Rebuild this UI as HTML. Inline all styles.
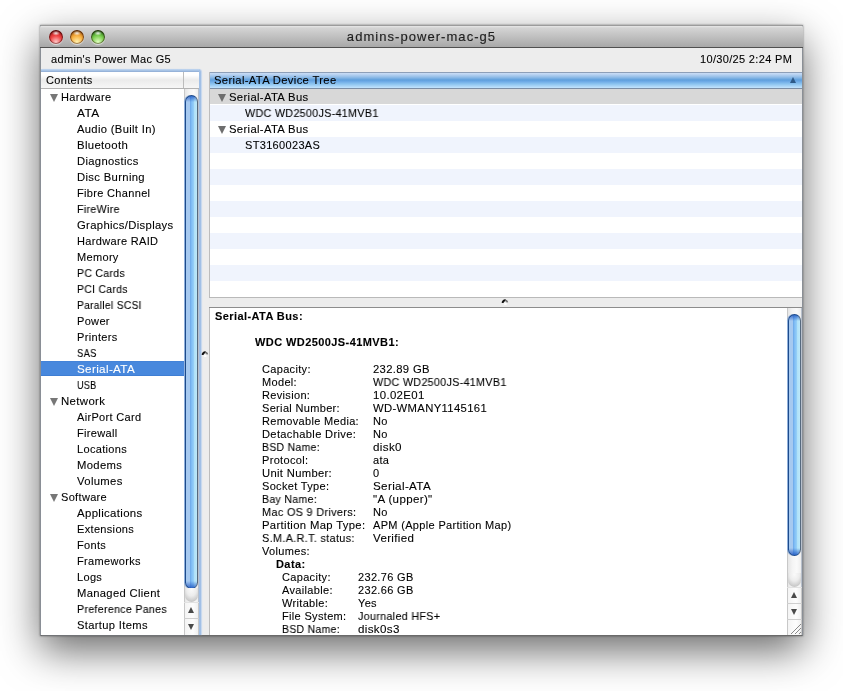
<!DOCTYPE html>
<html><head><meta charset="utf-8">
<style>
*{box-sizing:border-box;margin:0;padding:0}
html,body{width:843px;height:691px;overflow:hidden;background:#fff;font-family:"Liberation Sans",sans-serif;font-size:11px;color:#000}
div{position:absolute}
.t{white-space:pre;letter-spacing:0.33px;line-height:13px;will-change:transform;-webkit-text-stroke:0.1px currentColor}
.b{font-weight:bold;letter-spacing:0.42px}
#shadow{left:40px;top:25px;width:763px;height:611px;box-shadow:0 15px 38px rgba(0,0,0,0.58),0 0 2px rgba(0,0,0,0.45)}
#win{left:40px;top:25px;width:763px;height:611px;background:#ededed;border:1px solid #8a8f96;border-top-color:#9c9c9c;border-bottom-color:#6a6a6a}
#title{left:40px;top:25px;width:763px;height:23px;background:linear-gradient(#9c9c9c 0,#9c9c9c 1px,#e8e8e8 1px,#d4d4d4 3px,#a8a8a8 22px,#505050 22px);border-radius:3px 3px 0 0}
#title .tt{left:0;width:763px;top:4px;text-align:center;font-size:13px;letter-spacing:1.05px;color:#1e1e1e;white-space:pre;will-change:transform;-webkit-text-stroke:0.15px #1e1e1e}
.btn{top:5px;width:14px;height:14px;border-radius:50%;box-shadow:inset 0 0 0 1px rgba(40,0,0,0.45),inset 0 2px 2px rgba(0,0,0,0.35),0 1px 1px rgba(255,255,255,0.6)}
.ring{background:#93b6e2}
.hdr{background:linear-gradient(#ffffff 0,#ffffff 3px,#ebebeb 8px,#eeeeee 10px,#f6f6f6 16px,#b2b2b2 16px)}
.sel{background:linear-gradient(#3f7ed4,#4888dd 1px,#4888dd 14px,#3f7ed4 14px)}
.tri{width:0;height:0;border-left:4.5px solid transparent;border-right:4.5px solid transparent;border-top:8px solid #777}
.track{background:linear-gradient(90deg,#c8c8c8 0,#c8c8c8 1px,#e6e6e6 1px,#f4f4f4 35%,#fafafa 65%,#eeeeee 93%,#b8c0cc 93%)}
.thumb{border-radius:7px;border:1px solid #1d4a8a;border-right-color:#56697e;background:linear-gradient(rgba(25,80,190,0.75) 0,rgba(25,80,190,0) 6px,rgba(25,80,190,0) calc(100% - 7px),rgba(25,80,190,0.8) 100%),linear-gradient(90deg,#a6c9f0 0,#a6c9f0 4px,#6aa4e4 4px,#7ab8f4 5px,#98d2f8 8px,#aee0f8 8px,#bce8fa 11px,#8aa8c8 11px);box-shadow:-1px 0 0 #8fb0dc}
.tend{border-radius:0 0 7px 7px;background:radial-gradient(ellipse 9px 12px at 50% 10%,#fafafa 0,#ececec 55%,#c8c8c8 100%)}
.arrow{background:linear-gradient(90deg,#c8c8c8 0,#c8c8c8 1px,#f4f4f4 1px,#fdfdfd 60%,#f0f0f0 93%,#c8c8c8 93%);border-top:1px solid #cfcfcf}
.up{width:0;height:0;border-left:3.5px solid transparent;border-right:3.5px solid transparent;border-bottom:6px solid #4a4a4a}
.dn{width:0;height:0;border-left:3.5px solid transparent;border-right:3.5px solid transparent;border-top:6px solid #4a4a4a}
.bhdr{background:linear-gradient(#8d9fb8 0,#8d9fb8 1px,#c9dcf5 1px,#c0d7f3 2px,#94bee8 5px,#5e9fdc 8px,#6eaaE6 9.5px,#8cc4f0 12px,#b6dcfa 15px,#c4e4fd 16px,#7c8ea5 16px)}
</style></head><body>
<div id="shadow"></div>
<div id="win"></div>
<div id="title">
<div class="btn" style="left:9px;background:radial-gradient(ellipse 4px 2.6px at 50% 22%,rgba(255,255,255,0.95),rgba(255,255,255,0) 100%),radial-gradient(circle at 50% 85%,#ffc8c8 0,#ee4444 45%,#c42020 75%,#701010 100%)"></div>
<div class="btn" style="left:30px;background:radial-gradient(ellipse 4px 2.6px at 50% 22%,rgba(255,255,255,0.95),rgba(255,255,255,0) 100%),radial-gradient(circle at 50% 85%,#fff2b0 0,#f8b040 45%,#d07818 75%,#7a4a10 100%)"></div>
<div class="btn" style="left:51px;background:radial-gradient(ellipse 4px 2.6px at 50% 22%,rgba(255,255,255,0.95),rgba(255,255,255,0) 100%),radial-gradient(circle at 50% 85%,#e0ffc0 0,#7ccf50 45%,#3e9424 75%,#1e5a10 100%)"></div>
  <div class="tt">admins-power-mac-g5</div>
</div>
<div class="t" style="left:51px;top:53px">admin's Power Mac G5</div>
<div class="t" style="left:700px;top:53px">10/30/25 2:24 PM</div>

<!-- sidebar focus ring -->
<div style="left:41px;top:69px;width:160px;height:566px;border:3px solid #a2c0e6;border-left:0;border-bottom:0;border-right-width:2px;border-radius:0 3px 0 0;box-shadow:1px 0 1px #c4d6ee"></div>
<div style="left:41px;top:69px;width:158px;height:3px;background:linear-gradient(#c4d8f0,#a8c4e6 50%,#8eabd2)"></div>
<div style="left:41px;top:72px;width:158px;height:563px;background:#fff"></div>
<div class="hdr" style="left:41px;top:72px;width:158px;height:17px"></div>
<div style="left:183px;top:72px;width:1px;height:16px;background:#bcbcbc"></div>
<div class="t" style="left:46px;top:74px">Contents</div>
<div style="left:0;top:0;width:843px;height:635px;overflow:hidden">
<div class="tri" style="left:50px;top:94px"></div>
<div class="t" style="left:61px;top:91px">Hardware</div>
<div class="t" style="left:77px;top:107px;transform:scaleX(1.0801);transform-origin:0 0">ATA</div>
<div class="t" style="left:77px;top:123px;transform:scaleX(1.0183);transform-origin:0 0">Audio (Built In)</div>
<div class="t" style="left:77px;top:139px;transform:scaleX(1.0329);transform-origin:0 0">Bluetooth</div>
<div class="t" style="left:77px;top:155px;transform:scaleX(1.0201);transform-origin:0 0">Diagnostics</div>
<div class="t" style="left:77px;top:171px;transform:scaleX(1.0244);transform-origin:0 0">Disc Burning</div>
<div class="t" style="left:77px;top:187px">Fibre Channel</div>
<div class="t" style="left:77px;top:203px;transform:scaleX(0.9677);transform-origin:0 0">FireWire</div>
<div class="t" style="left:77px;top:219px;transform:scaleX(1.0246);transform-origin:0 0">Graphics/Displays</div>
<div class="t" style="left:77px;top:235px">Hardware RAID</div>
<div class="t" style="left:77px;top:251px">Memory</div>
<div class="t" style="left:77px;top:267px;transform:scaleX(0.9536);transform-origin:0 0">PC Cards</div>
<div class="t" style="left:77px;top:283px;transform:scaleX(0.9433);transform-origin:0 0">PCI Cards</div>
<div class="t" style="left:77px;top:299px;transform:scaleX(0.9289);transform-origin:0 0">Parallel SCSI</div>
<div class="t" style="left:77px;top:315px">Power</div>
<div class="t" style="left:77px;top:331px">Printers</div>
<div class="t" style="left:77px;top:347px;transform:scaleX(0.8560);transform-origin:0 0">SAS</div>
<div class="sel" style="left:41px;top:361px;width:143px;height:15px"></div>
<div class="t" style="left:77px;top:363px;color:#fff;transform:scaleX(1.0592);transform-origin:0 0">Serial-ATA</div>
<div class="t" style="left:77px;top:379px;transform:scaleX(0.8246);transform-origin:0 0">USB</div>
<div class="tri" style="left:50px;top:398px"></div>
<div class="t" style="left:61px;top:395px;transform:scaleX(1.0382);transform-origin:0 0">Network</div>
<div class="t" style="left:77px;top:411px">AirPort Card</div>
<div class="t" style="left:77px;top:427px">Firewall</div>
<div class="t" style="left:77px;top:443px">Locations</div>
<div class="t" style="left:77px;top:459px;transform:scaleX(1.0231);transform-origin:0 0">Modems</div>
<div class="t" style="left:77px;top:475px;transform:scaleX(1.0275);transform-origin:0 0">Volumes</div>
<div class="tri" style="left:50px;top:494px"></div>
<div class="t" style="left:61px;top:491px">Software</div>
<div class="t" style="left:77px;top:507px;transform:scaleX(1.0368);transform-origin:0 0">Applications</div>
<div class="t" style="left:77px;top:523px">Extensions</div>
<div class="t" style="left:77px;top:539px">Fonts</div>
<div class="t" style="left:77px;top:555px">Frameworks</div>
<div class="t" style="left:77px;top:571px">Logs</div>
<div class="t" style="left:77px;top:587px;transform:scaleX(1.0185);transform-origin:0 0">Managed Client</div>
<div class="t" style="left:77px;top:603px;transform:scaleX(0.9643);transform-origin:0 0">Preference Panes</div>
<div class="t" style="left:77px;top:619px;transform:scaleX(1.0160);transform-origin:0 0">Startup Items</div>
<div class="t" style="left:77px;top:635px">Sync</div>
</div>
<div class="track" style="left:184px;top:89px;width:15px;height:546px"></div>
<div class="thumb" style="left:185px;top:95px;width:13px;height:494px"></div>
<div class="tend" style="left:185px;top:588px;width:13px;height:14px"></div>
<div class="arrow" style="left:184px;top:602px;width:15px;height:16px;border-top-color:#e2e2e2"><div class="up" style="left:4px;top:4px"></div></div>
<div class="arrow" style="left:184px;top:618px;width:15px;height:17px"><div class="dn" style="left:4px;top:5px"></div></div>

<!-- vertical splitter dot -->
<svg width="8" height="8" style="position:absolute;left:201px;top:350px"><path d="M1.7 5 A2.5 2.5 0 0 1 4.6 2.3" stroke="#111" stroke-width="2" fill="none"/><path d="M4.4 2.3 A2.5 2.5 0 0 1 6.4 4.4" stroke="#666" stroke-width="1.6" fill="none"/><ellipse cx="4.2" cy="5.9" rx="1.5" ry="1" fill="#fff"/></svg>

<!-- upper table -->
<div style="left:209px;top:72px;width:593px;height:225px;background:#fff;border-left:1px solid #bdbdbd"></div>
<div class="bhdr" style="left:210px;top:72px;width:592px;height:17px"></div>
<div class="t" style="left:214px;top:74px;transform:scaleX(1.0210);transform-origin:0 0">Serial-ATA Device Tree</div>
<div class="up" style="left:790px;top:77px;border-bottom-color:#2e5a88"></div>
<div style="left:210px;top:89px;width:592px;height:15px;background:#d8d8d8"></div>
<div style="left:210px;top:105px;width:592px;height:16px;background:#f0f4fd"></div>
<div style="left:210px;top:137px;width:592px;height:16px;background:#f0f4fd"></div>
<div style="left:210px;top:169px;width:592px;height:16px;background:#f0f4fd"></div>
<div style="left:210px;top:201px;width:592px;height:16px;background:#f0f4fd"></div>
<div style="left:210px;top:233px;width:592px;height:16px;background:#f0f4fd"></div>
<div style="left:210px;top:265px;width:592px;height:16px;background:#f0f4fd"></div>
<div class="tri" style="left:218px;top:94px;border-top-color:#6e6e6e"></div>
<div class="t" style="left:229px;top:91px;transform:scaleX(1.0247);transform-origin:0 0">Serial-ATA Bus</div>
<div class="t" style="left:245px;top:107px;transform:scaleX(0.9743);transform-origin:0 0">WDC WD2500JS-41MVB1</div>
<div class="tri" style="left:218px;top:126px;border-top-color:#6e6e6e"></div>
<div class="t" style="left:229px;top:123px;transform:scaleX(1.0247);transform-origin:0 0">Serial-ATA Bus</div>
<div class="t" style="left:245px;top:139px">ST3160023AS</div>

<!-- horizontal splitter -->
<div style="left:209px;top:297px;width:593px;height:11px;background:#ececec;border-top:1px solid #b9b9b9;border-bottom:1px solid #8c8c8c"></div>
<svg width="8" height="8" style="position:absolute;left:501px;top:298px"><path d="M1.7 5 A2.5 2.5 0 0 1 4.6 2.3" stroke="#111" stroke-width="2" fill="none"/><path d="M4.4 2.3 A2.5 2.5 0 0 1 6.4 4.4" stroke="#666" stroke-width="1.6" fill="none"/><ellipse cx="4.4" cy="5.9" rx="1.5" ry="1" fill="#fff"/></svg>

<!-- detail -->
<div style="left:209px;top:308px;width:593px;height:327px;background:#fff;border-left:1px solid #bdbdbd"></div>
<div class="t b" style="left:215px;top:310px">Serial-ATA Bus:</div>
<div class="t b" style="left:255px;top:336px">WDC WD2500JS-41MVB1:</div>
<div class="t" style="left:262px;top:363px">Capacity:</div>
<div class="t" style="left:373px;top:363px;transform:scaleX(1.0237);transform-origin:0 0">232.89 GB</div>
<div class="t" style="left:262px;top:376px">Model:</div>
<div class="t" style="left:373px;top:376px;transform:scaleX(0.9743);transform-origin:0 0">WDC WD2500JS-41MVB1</div>
<div class="t" style="left:262px;top:389px">Revision:</div>
<div class="t" style="left:373px;top:389px;transform:scaleX(1.0388);transform-origin:0 0">10.02E01</div>
<div class="t" style="left:262px;top:402px">Serial Number:</div>
<div class="t" style="left:373px;top:402px;transform:scaleX(1.0263);transform-origin:0 0">WD-WMANY1145161</div>
<div class="t" style="left:262px;top:415px">Removable Media:</div>
<div class="t" style="left:373px;top:415px">No</div>
<div class="t" style="left:262px;top:428px;transform:scaleX(1.0119);transform-origin:0 0">Detachable Drive:</div>
<div class="t" style="left:373px;top:428px">No</div>
<div class="t" style="left:262px;top:441px;transform:scaleX(0.9485);transform-origin:0 0">BSD Name:</div>
<div class="t" style="left:373px;top:441px;transform:scaleX(1.0565);transform-origin:0 0">disk0</div>
<div class="t" style="left:262px;top:454px">Protocol:</div>
<div class="t" style="left:373px;top:454px">ata</div>
<div class="t" style="left:262px;top:467px;transform:scaleX(1.0191);transform-origin:0 0">Unit Number:</div>
<div class="t" style="left:373px;top:467px">0</div>
<div class="t" style="left:262px;top:480px">Socket Type:</div>
<div class="t" style="left:373px;top:480px;transform:scaleX(1.0592);transform-origin:0 0">Serial-ATA</div>
<div class="t" style="left:262px;top:493px;transform:scaleX(0.9594);transform-origin:0 0">Bay Name:</div>
<div class="t" style="left:373px;top:493px;transform:scaleX(1.0501);transform-origin:0 0">"A (upper)"</div>
<div class="t" style="left:262px;top:506px;transform:scaleX(0.9884);transform-origin:0 0">Mac OS 9 Drivers:</div>
<div class="t" style="left:373px;top:506px">No</div>
<div class="t" style="left:262px;top:519px;transform:scaleX(1.0260);transform-origin:0 0">Partition Map Type:</div>
<div class="t" style="left:373px;top:519px">APM (Apple Partition Map)</div>
<div class="t" style="left:262px;top:532px;transform:scaleX(0.9871);transform-origin:0 0">S.M.A.R.T. status:</div>
<div class="t" style="left:373px;top:532px;transform:scaleX(1.0493);transform-origin:0 0">Verified</div>
<div class="t" style="left:262px;top:545px">Volumes:</div>
<div class="t b" style="left:276px;top:558px">Data:</div>
<div class="t" style="left:282px;top:571px">Capacity:</div>
<div class="t" style="left:358px;top:571px">232.76 GB</div>
<div class="t" style="left:282px;top:584px">Available:</div>
<div class="t" style="left:358px;top:584px">232.66 GB</div>
<div class="t" style="left:282px;top:597px">Writable:</div>
<div class="t" style="left:358px;top:597px">Yes</div>
<div class="t" style="left:282px;top:610px">File System:</div>
<div class="t" style="left:358px;top:610px;transform:scaleX(0.9749);transform-origin:0 0">Journaled HFS+</div>
<div class="t" style="left:282px;top:623px;transform:scaleX(0.9485);transform-origin:0 0">BSD Name:</div>
<div class="t" style="left:358px;top:623px;transform:scaleX(1.0541);transform-origin:0 0">disk0s3</div>
<div class="track" style="left:787px;top:308px;width:15px;height:327px"></div>
<div class="thumb" style="left:788px;top:314px;width:13px;height:242px"></div>
<div class="tend" style="left:788px;top:573px;width:13px;height:14px"></div>
<div class="arrow" style="left:787px;top:587px;width:15px;height:16px;border-top-color:#e2e2e2"><div class="up" style="left:4px;top:4px"></div></div>
<div class="arrow" style="left:787px;top:603px;width:15px;height:16px"><div class="dn" style="left:4px;top:5px"></div></div>
<div class="arrow" style="left:787px;top:619px;width:15px;height:16px"><svg width="15" height="15" style="position:absolute;left:0;top:0"><path d="M4 14L14 4M8 14L14 8M12 14L14 12" stroke="#8a8a8a" stroke-width="1"/></svg></div>
</body></html>
